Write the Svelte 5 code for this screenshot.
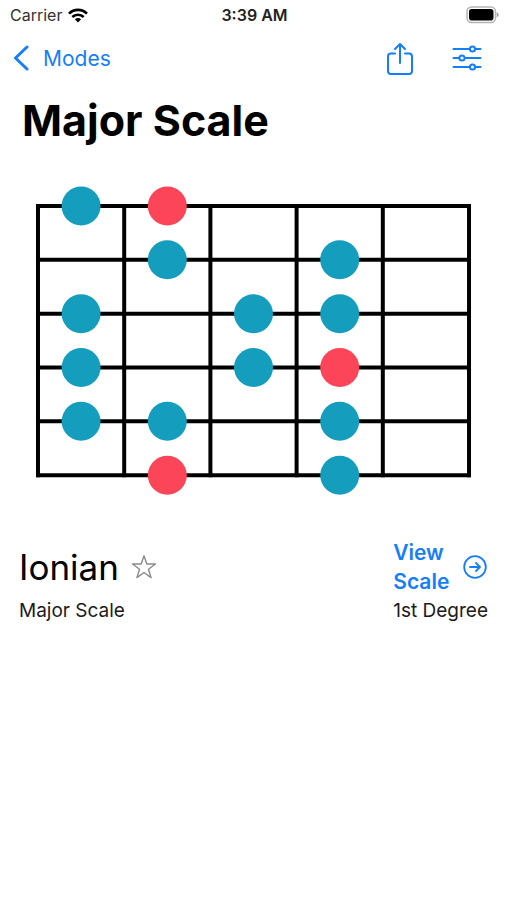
<script>
  const frets = [0, 1, 2, 3, 4, 5];
  const strings = [0, 1, 2, 3, 4, 5];
  const fretGap = 86.3;
  const stringGap = 53.9;
  const inset = 20;

  const notes = [
    { string: 0, fret: 0 },
    { string: 0, fret: 1, root: true },
    { string: 1, fret: 1 },
    { string: 1, fret: 3 },
    { string: 2, fret: 0 },
    { string: 2, fret: 2 },
    { string: 2, fret: 3 },
    { string: 3, fret: 0 },
    { string: 3, fret: 2 },
    { string: 3, fret: 3, root: true },
    { string: 4, fret: 0 },
    { string: 4, fret: 1 },
    { string: 4, fret: 3 },
    { string: 5, fret: 1, root: true },
    { string: 5, fret: 3 }
  ];

  const fretX = (n) => inset + n * fretGap;
  const stringY = (n) => inset + n * stringGap;

  let favorite = $state(false);
</script>

<div class="screen">
  <div class="status">
    <div class="carrier">
      <span>Carrier</span>
      <svg width="20" height="15" viewBox="0 0 20 15" aria-hidden="true">
        <g fill="none" stroke="#000" stroke-width="2.6">
          <path d="M1 5.6C6 .6 14 .6 19 5.6" />
          <path d="M4.3 9C7.4 5.9 12.6 5.9 15.7 9" />
        </g>
        <path d="M6.9 11.3C8.7 9.7 11.3 9.7 13.1 11.3L10 14.5Z" />
      </svg>
    </div>
    <time>3:39 AM</time>
    <svg class="battery" width="33" height="18" viewBox="0 0 33 18" aria-hidden="true">
      <rect x="1" y="1" width="28.5" height="15.5" rx="4.5" fill="#fff" stroke="#b5b5b5" stroke-width="1.5" />
      <rect x="3" y="3" width="24.5" height="11.5" rx="2.8" />
      <path d="M30.8 6.2Q32.6 7 32.6 8.8T30.8 11.4Z" fill="#999" />
    </svg>
  </div>

  <nav>
    <a class="back" href="#modes">
      <svg width="16" height="26" viewBox="0 0 16 26" aria-hidden="true">
        <path d="M14 2L2.5 13L14 24" fill="none" stroke="currentColor" stroke-width="3" stroke-linecap="round" stroke-linejoin="round" />
      </svg>
      <span>Modes</span>
    </a>
    <div class="tools">
      <button type="button" aria-label="Share">
        <svg width="28" height="34" viewBox="0 0 28 34" fill="none" stroke="currentColor" stroke-width="2" stroke-linecap="round" stroke-linejoin="round" aria-hidden="true">
          <path d="M9 12.5H5Q2 12.5 2 15.5V30Q2 33 5 33H23Q26 33 26 30V15.5Q26 12.5 23 12.5H19" />
          <path d="M14 22V3M9 8L14 3L19 8" />
        </svg>
      </button>
      <button type="button" aria-label="Settings">
        <svg width="30" height="26" viewBox="0 0 30 26" stroke="currentColor" stroke-width="2" stroke-linecap="round" aria-hidden="true">
          <path d="M1.5 4H28.5M1.5 13H28.5M1.5 22H28.5" />
          <g fill="#fff">
            <circle cx="20.5" cy="4" r="2.6" />
            <circle cx="10" cy="13" r="2.6" />
            <circle cx="20.5" cy="22" r="2.6" />
          </g>
        </svg>
      </button>
    </div>
  </nav>

  <h1>Major Scale</h1>

  <svg class="board" viewBox="0 0 471.5 309.5" role="img" aria-label="Major scale fretboard">
    <g stroke="#000" stroke-width="4" stroke-linecap="square">
      {#each strings as s}
        <line x1={fretX(0)} x2={fretX(5)} y1={stringY(s)} y2={stringY(s)} />
      {/each}
      {#each frets as f}
        <line x1={fretX(f)} x2={fretX(f)} y1={stringY(0)} y2={stringY(5)} />
      {/each}
    </g>
    {#each notes as note}
      <circle class:root={note.root} cx={fretX(note.fret + 0.5)} cy={stringY(note.string)} r="19.5" />
    {/each}
  </svg>

  <section>
    <div class="mode">
      <div class="name">
        <h2>Ionian</h2>
        <button class="star" type="button" aria-label="Favorite" aria-pressed={favorite} onclick={() => (favorite = !favorite)}>
          <svg width="26" height="26" viewBox="0 0 26 26" aria-hidden="true">
            <path d="M13 1.8L15.8 10H24.5L17.5 15.2L20.1 23.6L13 18.5L5.9 23.6L8.5 15.2L1.5 10H10.2Z" fill={favorite ? 'currentColor' : 'none'} stroke="currentColor" stroke-width="1.4" stroke-linejoin="round" />
          </svg>
        </button>
      </div>
      <p>Major Scale</p>
    </div>
    <div class="degree">
      <a class="view" href="#scale">
        <span>View<br />Scale</span>
        <svg width="24" height="24" viewBox="0 0 24 24" fill="none" stroke="currentColor" stroke-width="1.8" stroke-linecap="round" stroke-linejoin="round" aria-hidden="true">
          <circle cx="12" cy="12" r="10.8" />
          <path d="M7 12H17M13 8L17 12L13 16" />
        </svg>
      </a>
      <p>1st Degree</p>
    </div>
  </section>
</div>

<style>
  :global(body) {
    margin: 0;
    background: #fff;
  }
  .screen {
    font-family: Inter, 'Liberation Sans', sans-serif;
    color: #000;
  }
  svg {
    display: block;
    flex: none;
  }
  button {
    padding: 0;
    border: 0;
    background: none;
    color: inherit;
    cursor: pointer;
  }
  a {
    color: inherit;
    text-decoration: none;
  }
  .status {
    display: grid;
    grid-template-columns: 1fr auto 1fr;
    align-items: center;
    height: 30px;
    padding: 0 8px 0 10px;
    font-size: 16px;
  }
  .carrier {
    display: flex;
    align-items: center;
    gap: 6px;
    color: #333;
  }
  time {
    font-weight: 600;
    color: #222;
  }
  .battery {
    justify-self: end;
  }
  nav {
    display: flex;
    justify-content: space-between;
    align-items: center;
    height: 56px;
    padding: 0 25px 0 13px;
    color: #157efb;
  }
  .back {
    display: flex;
    align-items: center;
    gap: 14px;
    font-size: 21px;
  }
  .tools {
    display: flex;
    align-items: center;
    gap: 38px;
  }
  h1 {
    margin: 0 22px;
    font-size: 43px;
    line-height: 68px;
    font-weight: 700;
  }
  .board {
    width: calc(100% - 36px);
    margin: 32px 18px 0;
  }
  .board circle {
    fill: #159dbd;
  }
  .board circle.root {
    fill: #fc4559;
  }
  section {
    display: flex;
    justify-content: space-between;
    align-items: flex-end;
    padding: 0 19px;
    margin-top: 43px;
  }
  .name {
    display: flex;
    align-items: center;
    gap: 12px;
    height: 58px;
  }
  h2 {
    margin: 0;
    font-size: 35px;
    line-height: 44px;
    font-weight: 400;
  }
  .star {
    color: #8a8a8a;
  }
  p {
    margin: 0;
    font-size: 19px;
    line-height: 30px;
    color: #1a1a1a;
  }
  .view {
    display: flex;
    align-items: center;
    gap: 14px;
    font-size: 21px;
    line-height: 29px;
    font-weight: 600;
    color: #157efb;
  }
</style>
